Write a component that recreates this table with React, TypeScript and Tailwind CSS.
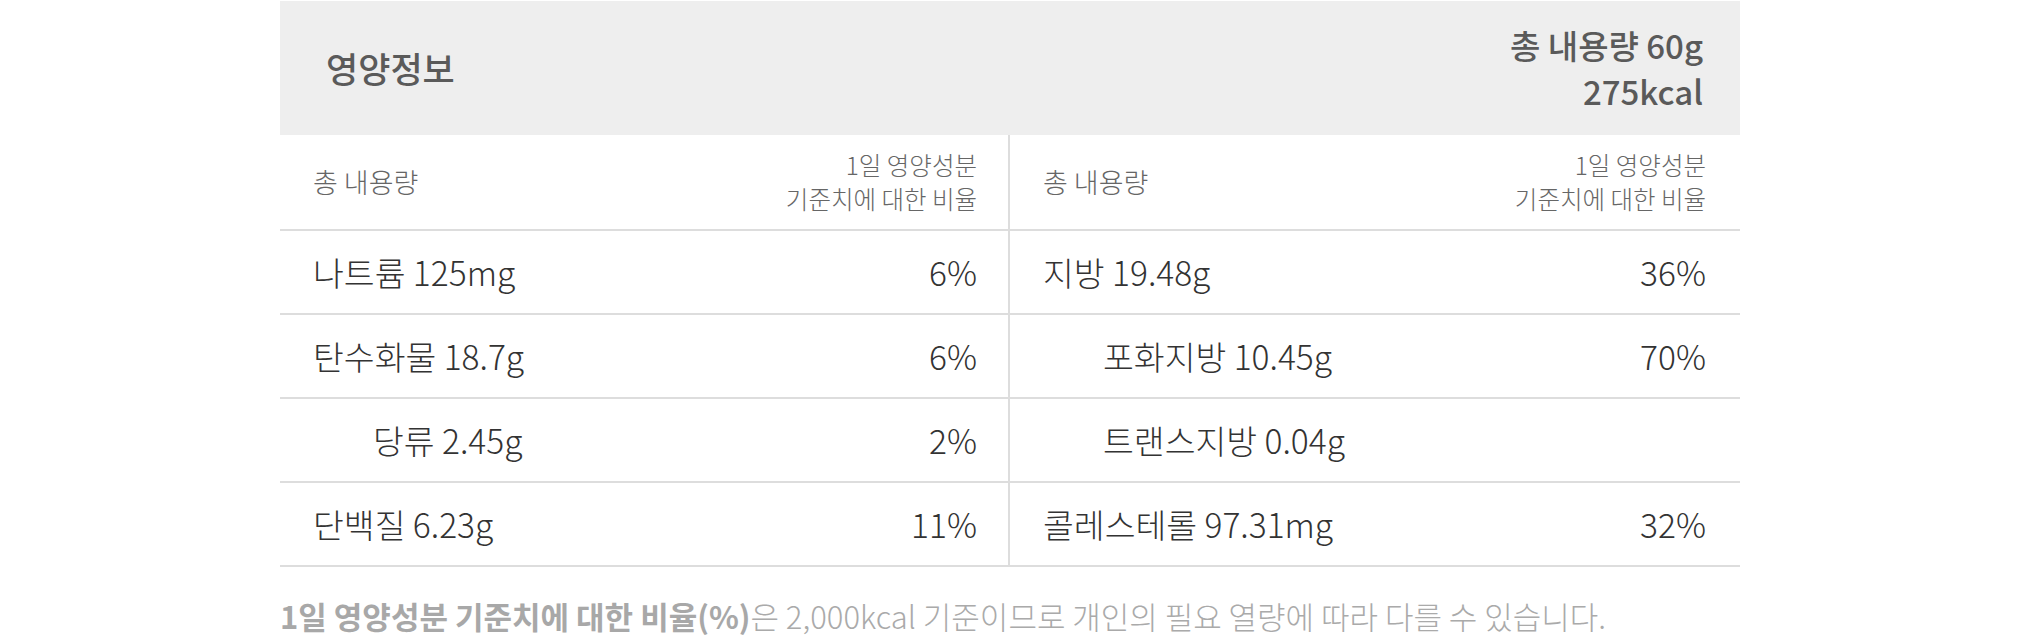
import React from "react";

interface Nutrient {
  label: string;
  value?: string;
  sub?: boolean;
}

const rows: [Nutrient, Nutrient][] = [
  [
    { label: "나트륨 125mg", value: "6%" },
    { label: "지방 19.48g", value: "36%" },
  ],
  [
    { label: "탄수화물 18.7g", value: "6%" },
    { label: "포화지방 10.45g", value: "70%", sub: true },
  ],
  [
    { label: "당류 2.45g", value: "2%", sub: true },
    { label: "트랜스지방 0.04g", sub: true },
  ],
  [
    { label: "단백질 6.23g", value: "11%" },
    { label: "콜레스테롤 97.31mg", value: "32%" },
  ],
];

const Cell = ({ item, left }: { item: Nutrient; left?: boolean }) => (
  <div
    className={`flex items-center justify-between pl-[33px] ${left ? "pr-[31px] border-r-2 border-[#dddddd]" : "pr-[34px]"}`}
  >
    <span className={`text-[33.5px] font-light text-[#333333] ${item.sub ? "pl-[60px]" : ""}`}>
      {item.label}
    </span>
    <span className="text-[33.5px] font-light text-[#333333]">{item.value}</span>
  </div>
);

const HeadCell = ({ left }: { left?: boolean }) => (
  <div
    className={`flex items-center justify-between pl-[33px] ${left ? "pr-[31px] border-r-2 border-[#dddddd]" : "pr-[34px]"}`}
  >
    <span className="text-[27px] font-light text-[#666666]">총 내용량</span>
    <span className="text-right text-[24.5px] leading-[34px] font-light text-[#666666]">
      1일 영양성분
      <br />
      기준치에 대한 비율
    </span>
  </div>
);

const App = () => {
  return (
    <div className="min-h-[637px] w-full bg-white pt-px font-['Noto_Sans_CJK_KR',sans-serif]">
      <div className="mx-auto w-[1460px]">
        <div className="flex h-[134px] items-center justify-between bg-[#eeeeee] pl-[46px] pr-[37px]">
          <h2 className="text-[35px] font-medium text-[#5a5a5a]">영양정보</h2>
          <div className="text-right text-[33px] leading-[46px] font-medium text-[#5a5a5a]">
            총 내용량 60g
            <br />
            275kcal
          </div>
        </div>
        <div className="grid h-[96px] grid-cols-2 border-b-2 border-[#dddddd]">
          <HeadCell left />
          <HeadCell />
        </div>
        {rows.map(([l, r], i) => (
          <div key={i} className="grid h-[84px] grid-cols-2 border-b-2 border-[#dddddd]">
            <Cell item={l} left />
            <Cell item={r} />
          </div>
        ))}
        <p className="mt-[27px] text-[31px] leading-[44px] font-light text-[#aaaaaa]">
          <span className="font-bold text-[#a8a8a8]">1일 영양성분 기준치에 대한 비율(%)</span>은
          2,000kcal 기준이므로 개인의 필요 열량에 따라 다를 수 있습니다.
        </p>
      </div>
    </div>
  );
};

export default App;
